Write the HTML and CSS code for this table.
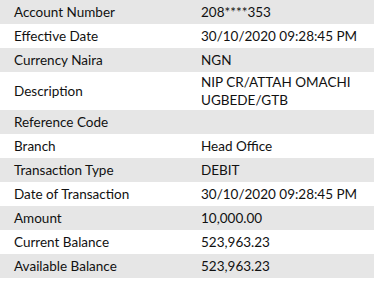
FILE: index.html
```html
<!DOCTYPE html>
<html lang="en">
<head>
  <meta charset="UTF-8">
  <title>Transaction Details</title>
  <link rel="stylesheet" href="styles.css">
</head>
<body>
  <table class="details">
    <tr><td class="label">Account Number</td><td class="value">208****353</td></tr>
    <tr><td class="label">Effective Date</td><td class="value">30/10/2020 09:28:45 PM</td></tr>
    <tr><td class="label">Currency Naira</td><td class="value">NGN</td></tr>
    <tr><td class="label">Description</td><td class="value">NIP CR/ATTAH OMACHI<br>UGBEDE/GTB</td></tr>
    <tr><td class="label">Reference Code</td><td class="value"></td></tr>
    <tr><td class="label">Branch</td><td class="value">Head Office</td></tr>
    <tr><td class="label">Transaction Type</td><td class="value">DEBIT</td></tr>
    <tr><td class="label">Date of Transaction</td><td class="value">30/10/2020 09:28:45 PM</td></tr>
    <tr><td class="label">Amount</td><td class="value">10,000.00</td></tr>
    <tr><td class="label">Current Balance</td><td class="value">523,963.23</td></tr>
    <tr><td class="label">Available Balance</td><td class="value">523,963.23</td></tr>
  </table>
</body>
</html>
```

FILE: styles.css
```css
body {
  margin: 0;
  background: #fff;
  font-family: Lato, "Open Sans", sans-serif;
  font-size: 13.5px;
  color: #111;
}
.details {
  width: 374px;
  border-collapse: collapse;
  border-spacing: 0;
  table-layout: fixed;
}
.details tr {
  height: 24px;
}
.details tr:nth-child(odd) {
  background-color: #e6e6e6;
}
.details td {
  padding: 1px 14px;
  line-height: 18px;
  vertical-align: middle;
  white-space: nowrap;
}
.label {
  width: 159px;
}
.value {
  width: 159px;
}
```
